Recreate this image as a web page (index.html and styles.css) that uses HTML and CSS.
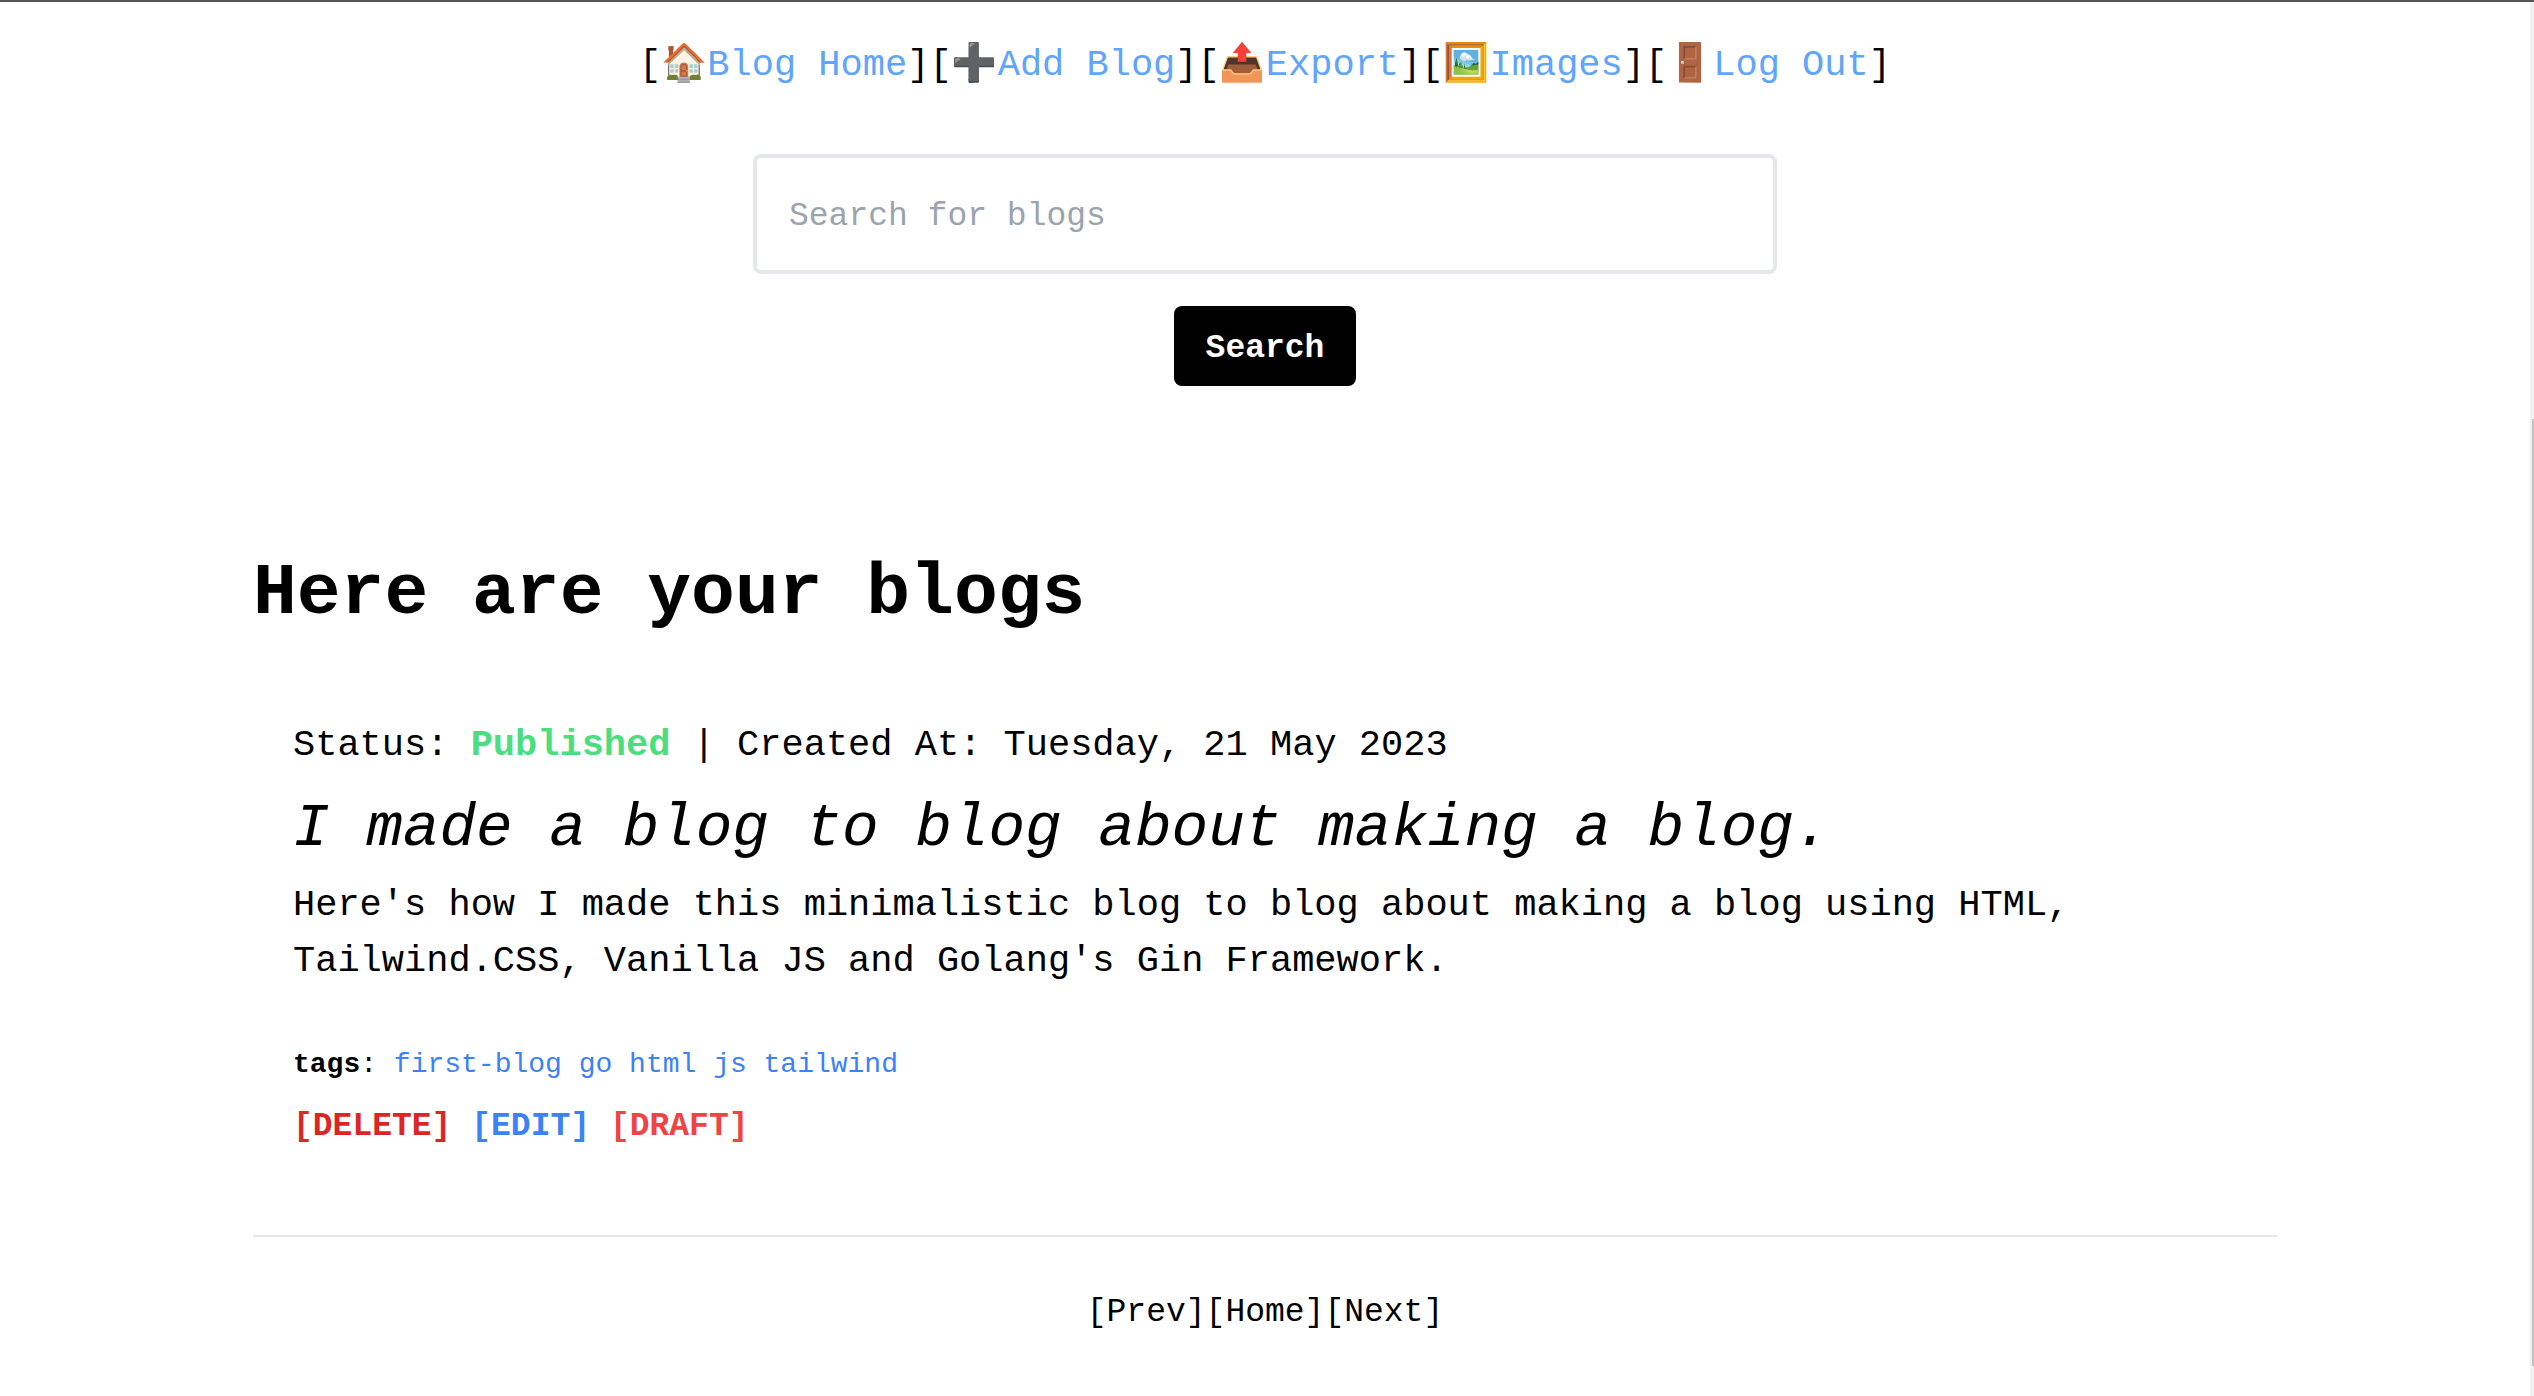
FILE: index.html
```html
<!DOCTYPE html>
<html lang="en">
<head>
<meta charset="utf-8">
<title>Blogs</title>
<link rel="stylesheet" href="styles.css">
</head>
<body>
<div class="page">
  <nav class="nav">
    <span>[<a href="#home">🏠Blog Home</a>]</span>
    <span>[<a href="#add">➕Add Blog</a>]</span>
    <span>[<a href="#export">📤Export</a>]</span>
    <span>[<a href="#images">🖼️Images</a>]</span>
    <span>[<a href="#logout">🚪Log Out</a>]</span>
  </nav>
  <form class="search">
    <input class="search-input" type="search" aria-label="Search for blogs" placeholder="Search for blogs">
    <button class="search-button" type="submit">Search</button>
  </form>
  <main class="content">
    <h1 class="heading">Here are your blogs</h1>
    <article class="blog">
      <p class="meta">Status: <strong class="published">Published</strong> | Created At: Tuesday, 21 May 2023</p>
      <h2 class="title">I made a blog to blog about making a blog.</h2>
      <p class="summary">Here's how I made this minimalistic blog to blog about making a blog using HTML, Tailwind.CSS, Vanilla JS and Golang's Gin Framework.</p>
      <p class="tags"><strong>tags</strong>: <a href="#first-blog">first-blog</a> <a href="#go">go</a> <a href="#html">html</a> <a href="#js">js</a> <a href="#tailwind">tailwind</a></p>
      <p class="actions"><button class="action delete" type="button">[DELETE]</button> <button class="action edit" type="button">[EDIT]</button> <button class="action draft" type="button">[DRAFT]</button></p>
    </article>
    <nav class="pager" aria-label="Pages">
      <a href="#prev">[Prev]</a>
      <a href="#first">[Home]</a>
      <a href="#next">[Next]</a>
    </nav>
  </main>
</div>
<div class="scrollbar" aria-hidden="true"><div class="thumb"></div></div>
</body>
</html>
```
FILE: styles.css
```css
* {
  box-sizing: border-box;
  margin: 0;
  padding: 0;
}

body {
  background: #fff;
  color: #000;
  font-family: "Liberation Mono", "Noto Color Emoji", monospace;
  font-size: 37px;
  line-height: 56px;
}

a {
  color: inherit;
  text-decoration: none;
}

.page {
  margin-right: 4px;
  padding-top: 37px;
}

.nav,
.pager {
  display: flex;
  flex-wrap: wrap;
  justify-content: center;
}

.nav a {
  color: #60a5fa;
}

.search {
  display: flex;
  flex-direction: column;
  align-items: center;
  gap: 32px;
  padding: 61px 32px 0;
}

.search-input {
  width: 100%;
  max-width: 1024px;
  padding: 35px 32px 29px;
  border: 4px solid #e5e7eb;
  border-radius: 8px;
  background: #fff;
  font: 33px/48px "Liberation Mono", monospace;
  appearance: none;
}

.search-input::placeholder {
  color: #9ca3af;
}

.search-button {
  padding: 19px 32px 13px;
  border: 0;
  border-radius: 8px;
  background: #000;
  color: #fff;
  font: bold 33px/48px "Liberation Mono", monospace;
}

.content {
  width: 80%;
  margin: 168px auto 0;
}

.heading {
  font-size: 73px;
  line-height: 80px;
}

.blog {
  padding: 83px 40px 84px;
  border-bottom: 2px solid #e5e7eb;
}

.published {
  color: #4ade80;
}

.title {
  margin: 20px 0 12px;
  font-size: 61px;
  font-style: italic;
  font-weight: normal;
  line-height: 72px;
}

.tags {
  margin-top: 56px;
  font-size: 28px;
  line-height: 40px;
}

.tags a {
  color: #3b82f6;
}

.actions {
  margin-top: 18px;
  font-size: 33px;
  line-height: 48px;
}

.action {
  border: 0;
  background: none;
  font: inherit;
  font-weight: bold;
}

.delete {
  color: #dc2626;
}

.edit {
  color: #3b82f6;
}

.draft {
  color: #ef4444;
}

.pager {
  padding: 52px 0 20px;
  font-size: 33px;
  line-height: 48px;
}

/* Dark rule along the top edge of the window */
body::before {
  content: "";
  position: fixed;
  inset: 0 0 auto;
  z-index: 1;
  height: 2px;
  background: #555;
}

.scrollbar {
  position: fixed;
  inset: 0 0 0 auto;
  width: 4px;
  background: #f1f1f1;
}

.thumb {
  position: absolute;
  inset: 30% 0 30px 2px;
  background: #c1c1c1;
}
```
